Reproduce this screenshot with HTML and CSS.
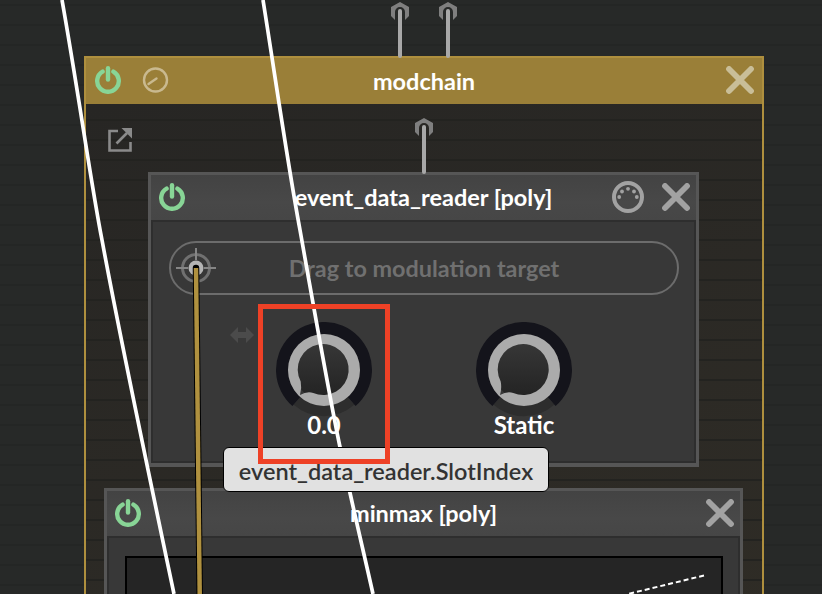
FILE: index.html
```html
<!DOCTYPE html>
<html lang="en">
<head>
<meta charset="utf-8">
<title>modchain</title>
<link rel="stylesheet" href="styles.css">
</head>
<body>
<div class="canvas">
  <section class="node node-root">
    <header class="head head-gold">
      <div class="head-left">
        <svg class="icon" viewBox="0 0 28 28"><use href="#i-power"/></svg>
        <svg class="icon icon-clock" viewBox="0 0 28 28"><circle cx="14.500" cy="14" r="11.500"/><path d="M7.500 18 L15.500 12.500"/></svg>
      </div>
      <h2 class="title">modchain</h2>
      <svg class="icon icon-x-gold" viewBox="0 0 28 28"><use href="#i-x"/></svg>
    </header>
    <div class="root-body">
      <svg class="icon-ext" viewBox="0 0 24 24"><path d="M10 3 H1.500 V22.500 H22.500 V14"/><path d="M8.500 15.500 L19 5"/><path class="ext-head" d="M13.500 0 H24 V10.500 Z"/></svg>

      <section class="node node-reader">
        <header class="head head-gray">
          <div class="head-left">
            <svg class="icon" viewBox="0 0 28 28"><use href="#i-power"/></svg>
          </div>
          <h2 class="title">event_data_reader [poly]</h2>
          <div class="head-right">
            <svg class="icon-midi" viewBox="0 0 32 32"><circle class="midi-ring" cx="16" cy="16" r="14"/><circle cx="7.200" cy="16" r="1.900"/><circle cx="10" cy="10.500" r="1.900"/><circle cx="16" cy="7.800" r="1.900"/><circle cx="22" cy="10.500" r="1.900"/><circle cx="24.800" cy="16" r="1.900"/></svg>
            <svg class="icon icon-x-gray" viewBox="0 0 28 28"><use href="#i-x"/></svg>
          </div>
        </header>
        <div class="panel panel-reader">
          <div class="pill">
            <svg class="target" viewBox="0 0 40 40"><circle class="t-ring" cx="20" cy="20" r="13.500"/><path class="t-cross" d="M0 20 H12 M28 20 H40 M20 0 V12 M20 28 V36"/><circle class="t-dot" cx="20" cy="20" r="7.500"/></svg>
            <span class="pill-text">Drag to modulation target</span>
          </div>
          <div class="knobs">
            <svg class="drag-arrow" viewBox="0 0 24 16"><path d="M0 8 L8 0 V5 H16 V0 L24 8 L16 16 V11 H8 V16 Z"/></svg>
            <div class="knob">
              <svg class="knob-dial" viewBox="-48 -48 96 96"><use href="#i-knob"/></svg>
              <span class="knob-label">0.0</span>
            </div>
            <div class="knob">
              <svg class="knob-dial" viewBox="-48 -48 96 96"><use href="#i-knob"/></svg>
              <span class="knob-label">Static</span>
            </div>
          </div>
        </div>
      </section>

      <section class="node node-minmax">
        <header class="head head-gray">
          <div class="head-left">
            <svg class="icon" viewBox="0 0 28 28"><use href="#i-power"/></svg>
          </div>
          <h2 class="title">minmax [poly]</h2>
          <svg class="icon icon-x-gray" viewBox="0 0 28 28"><use href="#i-x"/></svg>
        </header>
        <div class="panel panel-minmax">
          <div class="graph"></div>
        </div>
      </section>
    </div>
  </section>

  <svg class="cables" viewBox="0 0 822 594">
    <g class="port"><path d="M400 2 L409 7 V16 L405 20 V12 A5 5 0 0 0 395 12 V20 L391 16 V7 Z"/></g>
    <g class="port"><path d="M448 2 L457 7 V16 L453 20 V12 A5 5 0 0 0 443 12 V20 L439 16 V7 Z"/></g>
    <g class="port"><path d="M424 118 L433 123 V132 L429 136 V128 A5 5 0 0 0 419 128 V136 L415 132 V123 Z"/></g>
    <path class="wire-gray" d="M400 11 V56"/>
    <path class="wire-gray" d="M448 11 V56"/>
    <path class="wire-gray" d="M424 127 V172"/>
    <path class="wire-white" d="M62 0 C78 90 92 190 102 240 C114 305 150 480 174 594"/>
    <path class="wire-white" d="M263 0 C275 75 287 160 300 230 C313 303 330 400 340 447 C350 495 362 545 373 594"/>
    <path class="wire-gold-edge" d="M196 268 L199.700 594"/>
    <path class="wire-gold" d="M196 268 L199.700 594"/>
    <path class="graph-line" d="M704 575.500 L628 594"/>
  </svg>

  <div class="tooltip">event_data_reader.SlotIndex</div>
  <div class="highlight"></div>
</div>

<svg class="defs" width="0" height="0">
  <defs>
    <linearGradient id="knob-fill" x1="0" y1="0" x2="0" y2="1">
      <stop offset="0" stop-color="#383838"/>
      <stop offset="1" stop-color="#222222"/>
    </linearGradient>
    <g id="i-power">
      <path class="pw-ring" d="M8.600 5.650 A10.800 10.800 0 1 0 19.400 5.650"/>
      <path class="pw-stem" d="M14 2.200 V13.500"/>
    </g>
    <g id="i-x">
      <path class="x-stroke" d="M3 3 L25 25 M25 3 L3 25"/>
    </g>
    <g id="i-knob">
      <path class="k-shade" d="M-27 31 A41 41 0 0 0 27 31" />
      <path class="k-track" d="M-31.600 36.100 A48 48 0 1 1 31.600 36.100 L23.700 27.100 A36 36 0 1 0 -23.700 27.100 Z" />
      <circle cx="0" cy="0" r="30" fill="url(#knob-fill)"/>
      <path class="k-ring" fill-rule="evenodd" d="M0 -36 A36 36 0 1 1 0 36 A36 36 0 1 1 0 -36 Z M-23.300 11.500 Q-22 18 -24 25 Q-17 21 -10.700 23 A25.500 25.500 0 1 0 -23.300 11.500 Z"/>
    </g>
  </defs>
</svg>
</body>
</html>
```

FILE: styles.css
```css
* { box-sizing: border-box; }
html, body { margin: 0; padding: 0; height: 100%; }
body { overflow: hidden; background: #272928; font-family: "Lato", "Liberation Sans", sans-serif; }

.defs { position: absolute; }

.canvas {
  position: relative;
  width: 822px;
  height: 594px;
  overflow: hidden;
  background-color: #272928;
  background-image: repeating-linear-gradient(180deg, transparent 0 4px, #242625 4px 6px, transparent 6px 20px);
}

.node-root {
  position: absolute;
  left: 84px;
  top: 56px;
  width: 680px;
  height: 700px;
  border: 2px solid #ae8f3e;
  display: flex;
  flex-direction: column;
}

.head {
  display: flex;
  align-items: center;
  justify-content: space-between;
  flex: none;
  height: 46px;
  position: relative;
}
.head-gold { background: #9a7f38; padding: 0 8px 2px; margin: 0; }
.head-gray { background: linear-gradient(180deg, #434343, #484848 60%, #464646); height: 45px; padding: 0 6px 2px 7px; }

.head-left { display: flex; align-items: center; gap: 19px; }
.head-right { display: flex; align-items: center; gap: 18px; }

.title {
  position: absolute;
  left: 0;
  right: 0;
  top: 0;
  bottom: 0;
  margin: 0;
  display: flex;
  align-items: center;
  justify-content: center;
  color: #fff;
  font-size: 23.500px;
  font-weight: 700;
}
.head-gray .title { bottom: 2px; }

.icon { width: 28px; height: 28px; flex: none; position: relative; z-index: 1; }
.icon-clock { fill: none; stroke: #c9b98f; stroke-width: 2.400; stroke-linecap: round; }

.pw-ring, .pw-stem { fill: none; stroke: #88d596; stroke-width: 4.400; stroke-linecap: round; }
.x-stroke { fill: none; stroke-width: 5.800; stroke-linecap: round; }
.icon-x-gold { stroke: #c9be98; }
.icon-x-gray { stroke: #a2a2a2; }

.root-body {
  flex: 1;
  padding: 24px 0 0 62px;
  background-color: #2a2824;
  background-image:
    repeating-linear-gradient(180deg, transparent 0 15px, #232320 15px 17px, transparent 17px 20px),
    linear-gradient(160deg, #272624, #302d26);
  display: flex;
  flex-direction: column;
  align-items: flex-start;
}

.icon-ext { width: 24px; height: 24px; margin-left: -40px; margin-bottom: 20px; flex: none; fill: none; stroke: #8a8a8a; stroke-width: 2.600; }
.ext-head { fill: #8a8a8a; stroke: none; }

.node-reader {
  width: 551px;
  height: 295px;
  flex: none;
  border: 3px solid #565656;
  border-bottom-width: 4px;
  background: #383838;
  display: flex;
  flex-direction: column;
}
.node-minmax {
  width: 639px;
  height: 200px;
  flex: none;
  margin: 21px 0 0 -44px;
  border: 3px solid #565656;
  background: #383838;
  display: flex;
  flex-direction: column;
}

.panel {
  flex: 1;
  border: 2px solid #2e2e2e;
  background: #383838;
}
.panel-reader { padding: 19px 15px 0 16px; }
.panel-minmax { padding: 18px 15px 0 16px; }

.graph { height: 100%; background: #252525; border: 2px solid #000; }

.pill {
  height: 54px;
  border: 2px solid #6c6c6c;
  border-radius: 27px;
  display: flex;
  align-items: center;
  justify-content: center;
  position: relative;
}
.pill-text { color: #707070; font-size: 23.400px; font-weight: 700; }
.target { position: absolute; left: 5px; top: 5px; width: 40px; height: 40px; }
.t-ring { fill: none; stroke: #707070; stroke-width: 3; }
.t-cross { fill: none; stroke: #858585; stroke-width: 2; }
.t-dot { fill: #b4b4b4; }

.knobs { position: relative; display: flex; gap: 104px; padding-left: 107px; margin-top: 27px; }
.drag-arrow { position: absolute; left: 61px; top: 5px; width: 24px; height: 16px; fill: #4b4b4b; }

.knob { width: 96px; display: flex; flex-direction: column; align-items: center; }
.knob-dial { width: 96px; height: 96px; flex: none; }
.knob-label { color: #fff; font-size: 24px; font-weight: 700; line-height: 26px; margin-top: -6px; }

.k-shade { fill: none; stroke: #2d2d2d; stroke-width: 10; }
.k-track { fill: #14141b; }
.k-ring { fill: #ababab; }

.icon-midi { width: 32px; height: 32px; fill: #a2a2a2; }
.midi-ring { fill: none; stroke: #a2a2a2; stroke-width: 4; }

.cables { position: absolute; left: 0; top: 0; width: 822px; height: 594px; fill: none; }
.port path { fill: #7f7f7f; }
.wire-gray { stroke: #a8a8a8; stroke-width: 4; stroke-linecap: round; }
.wire-white { stroke: #fff; stroke-width: 3.700; }
.wire-gold-edge { stroke: #000; stroke-width: 6.500; stroke-linecap: round; }
.wire-gold { stroke: #b0913f; stroke-width: 4.500; stroke-linecap: butt; }
.graph-line { stroke: #fff; stroke-width: 2; stroke-dasharray: 5 3; }

.tooltip {
  position: absolute;
  left: 223px;
  top: 447px;
  width: 326px;
  height: 45px;
  padding-top: 2px;
  background: #e1e1e1;
  border: 1px solid #000;
  border-radius: 6px;
  color: #333;
  font-size: 23.500px;
  font-weight: 600;
  display: flex;
  align-items: center;
  justify-content: center;
}
.highlight {
  position: absolute;
  left: 258px;
  top: 304px;
  width: 132px;
  height: 160px;
  border: 5px solid #ee4126;
}
```
